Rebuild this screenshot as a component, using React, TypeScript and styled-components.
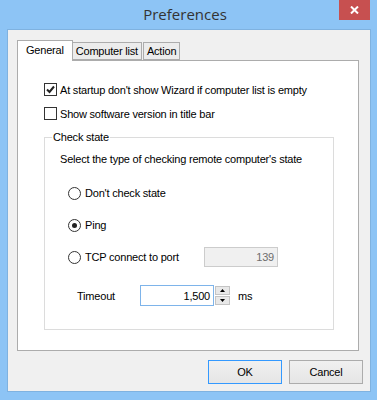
import styled, { createGlobalStyle } from "styled-components";

const GlobalStyle = createGlobalStyle`
  html, body {
    margin: 0;
    padding: 0;
  }
  body {
    font-family: "Liberation Sans", Arial, sans-serif;
    font-size: 11px;
    letter-spacing: -0.2px;
    color: #000;
  }
`;

const Window = styled.div`
  width: 377px;
  height: 400px;
  background: #8dc4f5;
  display: flex;
  flex-direction: column;
  box-sizing: border-box;
`;

const TitleBar = styled.div`
  height: 29px;
  display: grid;
  grid-template-columns: 1fr auto 1fr;
  align-items: start;
  padding-right: 7px;
`;

const Title = styled.div`
  grid-column: 2;
  font-family: "Open Sans", "Liberation Sans", sans-serif;
  font-size: 15px;
  letter-spacing: 0;
  color: #333;
  padding-top: 4px;
`;

const CloseButton = styled.div`
  grid-column: 3;
  justify-self: end;
  width: 31px;
  height: 20px;
  background: #c75050;
  display: flex;
  align-items: center;
  justify-content: center;
`;

const Client = styled.div`
  flex: 1;
  margin: 0 6px 8px 7px;
  border: 1px solid #7fb2e0;
  background: #f0f0f0;
  display: flex;
  flex-direction: column;
  padding: 9px 7px 0 9px;
`;

const TabStrip = styled.div`
  display: flex;
  align-items: flex-end;
  height: 21px;
  position: relative;
  z-index: 1;
`;

const Tab = styled.div<{ $active?: boolean }>`
  box-sizing: border-box;
  height: ${(p) => (p.$active ? "21px" : "18px")};
  padding: 0 ${(p) => (p.$active ? "8px" : "3px")};
  margin-bottom: ${(p) => (p.$active ? "-1px" : "0")};
  border: 1px solid #acacac;
  border-bottom: ${(p) => (p.$active ? "none" : "1px solid #acacac")};
  border-left: ${(p) => (p.$active ? "1px solid #acacac" : "none")};
  background: ${(p) => (p.$active ? "#fff" : "#ececec")};
  display: flex;
  align-items: center;
  padding-bottom: ${(p) => (p.$active ? "2px" : "0")};
  &:nth-child(3) {
    border-left: 1px solid #acacac;
    margin-left: 1px;
  }
`;

const Panel = styled.div`
  box-sizing: border-box;
  width: 342px;
  height: 291px;
  border: 1px solid #acacac;
  background: #fff;
  padding: 22px 0 0 26px;
  display: flex;
  flex-direction: column;
`;

const CheckRow = styled.div`
  display: flex;
  align-items: center;
  gap: 3px;
  height: 13px;
  margin-bottom: 11px;
`;

const CheckBox = styled.span`
  width: 13px;
  height: 13px;
  box-sizing: border-box;
  border: 1px solid #333;
  background: #fff;
  display: flex;
  align-items: center;
  justify-content: center;
`;

const Group = styled.fieldset`
  margin: 0;
  width: 290px;
  height: 199px;
  box-sizing: border-box;
  border: 1px solid #dcdcdc;
  padding: 0 0 0 15px;
  display: flex;
  flex-direction: column;
`;

const Legend = styled.legend`
  padding: 0 1px;
  margin-left: -8px;
  font-size: 11px;
`;

const Hint = styled.div`
  margin-top: 10px;
  height: 13px;
  white-space: pre;
`;

const RadioRow = styled.div<{ $first?: boolean }>`
  display: flex;
  align-items: center;
  gap: 4px;
  height: 20px;
  margin-left: 8px;
  margin-top: ${(p) => (p.$first ? "17px" : "12px")};
`;

const Radio = styled.span<{ $on?: boolean }>`
  width: 13px;
  height: 13px;
  box-sizing: border-box;
  border-radius: 50%;
  border: 1px solid #333;
  background: #fff;
  display: flex;
  align-items: center;
  justify-content: center;
  &::after {
    content: "";
    display: ${(p) => (p.$on ? "block" : "none")};
    width: 5px;
    height: 5px;
    border-radius: 50%;
    background: #222;
  }
`;

const Field = styled.div<{ $disabled?: boolean; $focus?: boolean }>`
  box-sizing: border-box;
  flex: none;
  width: 74px;
  height: ${(p) => (p.$disabled ? "20px" : "21px")};
  border: 1px solid
    ${(p) => (p.$disabled ? "#cccccc" : p.$focus ? "#7eb4ea" : "#abadb3")};
  background: ${(p) => (p.$disabled ? "#f0f0f0" : "#fff")};
  color: ${(p) => (p.$disabled ? "#6d6d6d" : "#000")};
  display: flex;
  align-items: center;
  justify-content: flex-end;
  padding-right: 3px;
`;

const TcpLabel = styled.span`
  width: 115px;
`;

const TimeoutRow = styled.div`
  display: flex;
  align-items: center;
  margin-top: 18px;
  margin-left: 17px;
`;

const TimeoutLabel = styled.span`
  width: 63px;
`;

const Spin = styled.div`
  display: flex;
  flex-direction: column;
  gap: 1px;
  margin-left: 1px;
  margin-right: 8px;
`;

const SpinButton = styled.div`
  width: 15px;
  height: 9px;
  box-sizing: border-box;
  border: 1px solid #c4c4c4;
  background: #e8e8e8;
  display: flex;
  align-items: center;
  justify-content: center;
`;

const Footer = styled.div`
  display: flex;
  justify-content: flex-end;
  gap: 7px;
  padding-top: 9px;
`;

const Button = styled.div<{ $default?: boolean }>`
  box-sizing: border-box;
  width: 74px;
  height: 24px;
  border: 1px solid ${(p) => (p.$default ? "#3399ff" : "#acacac")};
  background: linear-gradient(#f0f0f0, #e5e5e5);
  display: flex;
  align-items: center;
  justify-content: center;
`;

export default function App() {
  return (
    <Window>
      <GlobalStyle />
      <TitleBar>
        <Title>Preferences</Title>
        <CloseButton>
          <svg width="9" height="8" viewBox="0 0 9 8">
            <path d="M1 0.5 L8 7.5 M8 0.5 L1 7.5" stroke="#fff" strokeWidth="2" />
          </svg>
        </CloseButton>
      </TitleBar>

      <Client>
        <TabStrip>
          <Tab $active>General</Tab>
          <Tab>Computer list</Tab>
          <Tab>Action</Tab>
        </TabStrip>

        <Panel>
          <CheckRow>
            <CheckBox>
              <svg width="9" height="9" viewBox="0 0 9 9">
                <path d="M1 4.5 L3.5 7 L8 1.5" stroke="#222" strokeWidth="2" fill="none" />
              </svg>
            </CheckBox>
            At startup don't show Wizard if computer list is empty
          </CheckRow>
          <CheckRow>
            <CheckBox />
            Show software version in title bar
          </CheckRow>

          <Group>
            <Legend>Check state</Legend>
            <Hint>Select the type of checking remote computer's state</Hint>
            <RadioRow $first>
              <Radio />
              Don't check state
            </RadioRow>
            <RadioRow>
              <Radio $on />
              Ping
            </RadioRow>
            <RadioRow>
              <Radio />
              <TcpLabel>TCP connect to port</TcpLabel>
              <Field $disabled>139</Field>
            </RadioRow>
            <TimeoutRow>
              <TimeoutLabel>Timeout</TimeoutLabel>
              <Field $focus>1,500</Field>
              <Spin>
                <SpinButton>
                  <svg width="5" height="3" viewBox="0 0 5 3">
                    <path d="M0 3 L2.5 0 L5 3 Z" fill="#000" />
                  </svg>
                </SpinButton>
                <SpinButton>
                  <svg width="5" height="3" viewBox="0 0 5 3">
                    <path d="M0 0 L2.5 3 L5 0 Z" fill="#000" />
                  </svg>
                </SpinButton>
              </Spin>
              ms
            </TimeoutRow>
          </Group>
        </Panel>

        <Footer>
          <Button $default>OK</Button>
          <Button>Cancel</Button>
        </Footer>
      </Client>
    </Window>
  );
}
